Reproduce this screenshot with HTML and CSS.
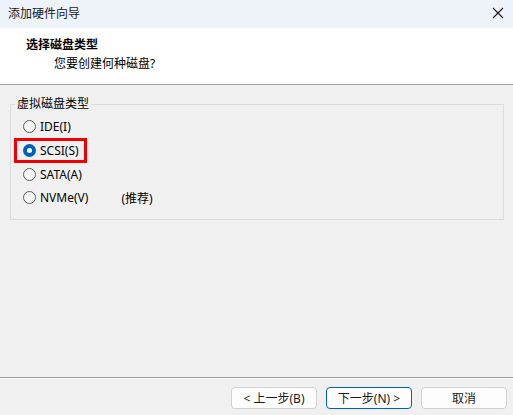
FILE: index.html
```html
<!DOCTYPE html>
<html lang="zh-CN">
<head>
    <meta charset="UTF-8">
    <meta name="viewport" content="width=device-width, initial-scale=1.0">
    <link rel="stylesheet" href="styles.css">
</head>
<body>
    <div class="window">
        <!-- Barra de título -->
        <div class="titlebar">
            <span class="title">添加硬件向导</span>
            <svg class="close" width="12" height="12" viewBox="0 0 12 12">
                <path d="M1 1 L11 11 M11 1 L1 11" stroke="#1a1a1a" stroke-width="1.1" fill="none"/>
            </svg>
        </div>

        <!-- Cabeçalho -->
        <div class="header">
            <div class="header-title">选择磁盘类型</div>
            <div class="header-sub">您要创建何种磁盘?</div>
        </div>

        <!-- Conteúdo -->
        <div class="content">
            <fieldset class="group">
                <legend>虚拟磁盘类型</legend>
                <div class="option">
                    <span class="radio"></span>
                    <span class="label">IDE(I)</span>
                </div>
                <div class="option marked">
                    <span class="radio checked"></span>
                    <span class="label">SCSI(S)</span>
                </div>
                <div class="option">
                    <span class="radio"></span>
                    <span class="label">SATA(A)</span>
                </div>
                <div class="option">
                    <span class="radio"></span>
                    <span class="label">NVMe(V)</span>
                    <span class="hint">(推荐)</span>
                </div>
            </fieldset>
        </div>

        <!-- Rodapé -->
        <div class="footer">
            <button class="btn">&lt; 上一步(B)</button>
            <button class="btn default-btn">下一步(N) &gt;</button>
            <button class="btn">取消</button>
        </div>
    </div>
</body>
</html>
```

FILE: styles.css
```css
* {
    margin: 0;
    padding: 0;
    box-sizing: border-box;
    font-family: "Noto Sans", "Noto Sans CJK SC", sans-serif;
}

html, body {
    height: 100%;
}

body {
    background: #f0f0f0;
    color: #1a1a1a;
    font-size: 12px;
}

.window {
    height: 100%;
    display: flex;
    flex-direction: column;
}

.titlebar {
    height: 28px;
    flex-shrink: 0;
    background: #eef2f9;
    display: flex;
    align-items: center;
    justify-content: space-between;
    padding: 0 8px 2px 8px;
}

.title {
    font-size: 12px;
    color: #1a1a1a;
}

.close {
    margin-right: 1px;
}

.header {
    height: 57px;
    flex-shrink: 0;
    background: #fff;
    border-bottom: 1px solid #a0a0a0;
    padding: 8px 0 0 26px;
}

.header-title {
    font-weight: bold;
    font-size: 12px;
    line-height: 17px;
    color: #000;
}

.header-sub {
    font-size: 12px;
    line-height: 17px;
    margin-top: 2px;
    padding-left: 28px;
    color: #000;
}

.content {
    flex: 1;
    padding: 11px 9px 0 10px;
}

.group {
    border: 1px solid #dcdcdc;
    padding: 3px 4px 9px 4px;
}

.group legend {
    padding: 0 2px;
    line-height: 16px;
    color: #000;
}

.option {
    position: relative;
    display: flex;
    align-items: center;
    height: 23.7px;
    padding-left: 8px;
    color: #000;
}

.radio {
    width: 13px;
    height: 13px;
    border-radius: 50%;
    border: 1px solid #5c5c5c;
    background: #f7f7f7;
    margin-right: 4px;
    flex-shrink: 0;
}

.radio.checked {
    border: none;
    background: #005fb8;
    display: flex;
    align-items: center;
    justify-content: center;
}

.radio.checked::after {
    content: "";
    width: 5px;
    height: 5px;
    border-radius: 50%;
    background: #fff;
}

.hint {
    margin-left: 33px;
}

/* destaque vermelho */
.marked::after {
    content: "";
    position: absolute;
    box-sizing: border-box;
    left: -1px;
    top: -1px;
    width: 73px;
    height: 25px;
    border: 3px solid #ee0000;
}

.footer {
    height: 38px;
    flex-shrink: 0;
    border-top: 1px solid #a0a0a0;
    box-shadow: inset 0 1px 0 #fff;
    display: flex;
    justify-content: flex-end;
    gap: 9px;
    padding: 9px 6px 0 0;
}

.btn {
    width: 86px;
    height: 22px;
    border: 1px solid #d0d0d0;
    border-radius: 4px;
    background: #fdfdfd;
    font-size: 12px;
    color: #1a1a1a;
}

.default-btn {
    border-color: #005fb8;
}
```
